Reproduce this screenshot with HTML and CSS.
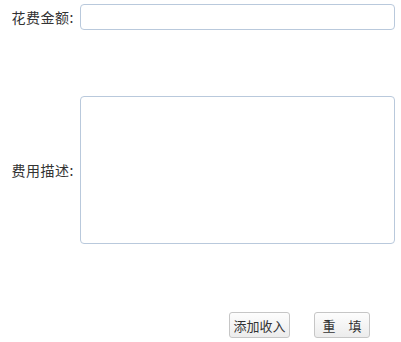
FILE: index.html
```html
<!DOCTYPE html>
<html>
<head>
    <meta charset="utf-8">
    <title>添加支出</title>
    <link rel="stylesheet" href="styles.css">
</head>
<body>
    <form class="form">
        <div class="row">
            <label class="label" for="amount">花费金额:</label>
            <input class="field" id="amount" type="text">
        </div>
        <div class="row row-desc">
            <label class="label" for="desc">费用描述:</label>
            <textarea class="field area" id="desc"></textarea>
        </div>
        <div class="actions">
            <button type="button" class="btn btn-add">添加收入</button>
            <button type="reset" class="btn btn-reset">重　填</button>
        </div>
    </form>
</body>
</html>
```

FILE: styles.css
```css
html, body {
    margin: 0;
    background: #FFF;
}
body {
    font-family: "Noto Sans CJK SC", "Liberation Sans", sans-serif;
    font-size: 13px;
    color: #333;
}
.form {
    padding: 4px 6px 0 0;
}
.row {
    display: flex;
    align-items: center;
}
.row-desc {
    margin-top: 66px;
}
.label {
    width: 74px;
    flex: none;
    text-align: right;
    padding-right: 6px;
    font-size: 14px;
    line-height: 18px;
    letter-spacing: 0.5px;
}
.field {
    box-sizing: border-box;
    flex: 1;
    height: 26px;
    margin: 0;
    border: 1px solid #b9c9dc;
    border-radius: 4px;
    background: #FFF;
    font: inherit;
    outline: none;
}
.area {
    height: 148px;
    resize: none;
}
.actions {
    display: flex;
    gap: 24px;
    margin-top: 68px;
    padding-left: 229px;
}
.btn {
    box-sizing: border-box;
    height: 26px;
    padding: 0;
    border: 1px solid #c6c6c6;
    border-radius: 3px;
    background: linear-gradient(#fdfdfd, #ececec);
    font: inherit;
    color: #333;
    cursor: pointer;
}
.btn-add {
    width: 61px;
}
.btn-reset {
    width: 56px;
}
```
